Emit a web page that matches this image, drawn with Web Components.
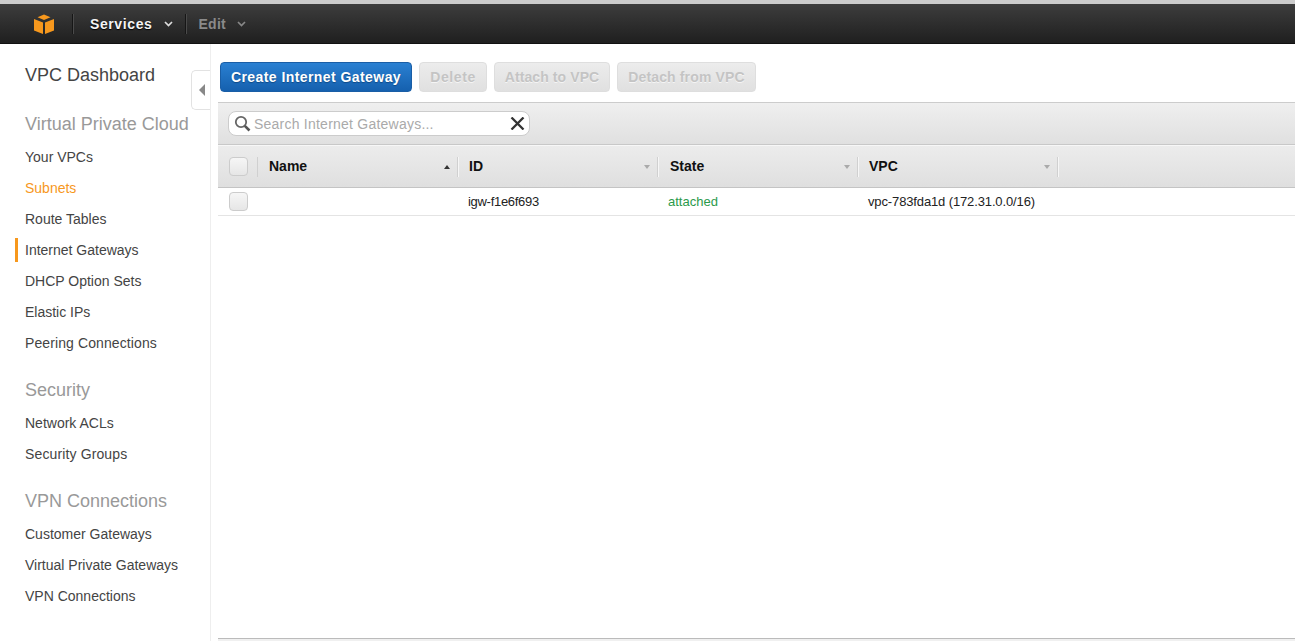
<!DOCTYPE html>
<html><head><meta charset="utf-8">
<style>
html,body{margin:0;padding:0;height:641px;overflow:hidden;background:#fff;font-family:"Liberation Sans",Arial,sans-serif}
body{display:flex;flex-direction:column}
</style></head><body>
<aws-nav></aws-nav>
<aws-shell>
<aws-side slot="side"></aws-side>
<aws-main slot="main"></aws-main>
</aws-shell>
<script>
function def(name,html){customElements.define(name,class extends HTMLElement{constructor(){super();this.attachShadow({mode:'open'}).innerHTML=html;}});}
def('aws-nav',`<style>
:host{display:block;height:44px;box-sizing:border-box;border-top:4px solid #ccc;background:linear-gradient(#3d3d3d,#1f1f1f);border-bottom:1px solid #111;color:#fff;font:bold 14px "Liberation Sans",sans-serif}
.r{display:flex;align-items:center;height:39px;padding-left:34px}
.sep{width:1px;height:20px;background:#4a4a4a;box-shadow:-1px 0 #161616}
svg{display:block}
.s{margin-left:16px;color:#f4f4f4;text-shadow:0 1px 1px #000;letter-spacing:.6px}
.e{margin-left:11px;color:#8a8a8a;letter-spacing:.3px}
.c1{margin-left:12px;margin-right:13px}
.c2{margin-left:11px}
</style><div class="r">
<svg width="20" height="20" viewBox="0 0 20 20"><path d="M0 5 L9 8.6 V20 L0 16.4Z M20 5 L11 8.6 V20 L20 16.4Z M10 0.5 L16.5 3.2 L10 5.9 L3.5 3.2Z" fill="#f7981d"/></svg>
<span class="sep" style="margin-left:19px"></span>
<span class="s">Services</span>
<svg class="c1" width="9" height="6" viewBox="0 0 9 6"><path d="M1 1 L4.5 4.5 L8 1" fill="none" stroke="#ddd" stroke-width="1.7"/></svg>
<span class="sep"></span>
<span class="e">Edit</span>
<svg class="c2" width="9" height="6" viewBox="0 0 9 6"><path d="M1 1 L4.5 4.5 L8 1" fill="none" stroke="#888" stroke-width="1.7"/></svg>
</div>`);
def('aws-shell',`<style>
:host{display:flex;flex:1;min-height:0;position:relative}
::slotted([slot=side]){width:211px;flex:none}
::slotted([slot=main]){flex:1;min-width:0}
.t{position:absolute;left:191px;top:26px;width:19px;height:40px;box-sizing:border-box;border:1px solid #e2e2e2;border-right:0;border-radius:5px 0 0 5px;background:#fff;display:flex;align-items:center;justify-content:center;padding-left:2px}
</style><slot name="side"></slot><slot name="main"></slot>
<div class="t"><svg width="6" height="12" viewBox="0 0 6 12"><path d="M6 0 V12 L0 6Z" fill="#888"/></svg></div>`);
def('side-link',`<style>
:host{display:block;height:24px;line-height:24px;margin-bottom:7px;font-size:14px;color:#444;padding-left:10px;margin-left:15px;position:relative}
:host([orange]){color:#f7981d}
:host([active]){box-shadow:inset 3px 0 #f7981d;}
</style><slot></slot>`);
def('side-head',`<style>
:host{display:block;font-size:18px;line-height:24px;color:#999;padding-left:25px;margin-bottom:9px}
:host([dash]){color:#444;margin-bottom:25px}
</style><slot></slot>`);
def('aws-side',`<style>
:host{display:block;box-sizing:border-box;border-right:1px solid #eee;padding-top:19px;font-family:"Liberation Sans",sans-serif}
.g{margin-top:23px}
</style>
<side-head dash>VPC Dashboard</side-head>
<side-head>Virtual Private Cloud</side-head>
<side-link>Your VPCs</side-link>
<side-link orange>Subnets</side-link>
<side-link>Route Tables</side-link>
<side-link active>Internet Gateways</side-link>
<side-link>DHCP Option Sets</side-link>
<side-link>Elastic IPs</side-link>
<side-link style="letter-spacing:.1px">Peering Connections</side-link>
<side-head class="g">Security</side-head>
<side-link>Network ACLs</side-link>
<side-link style="letter-spacing:.13px">Security Groups</side-link>
<side-head class="g">VPN Connections</side-head>
<side-link>Customer Gateways</side-link>
<side-link>Virtual Private Gateways</side-link>
<side-link>VPN Connections</side-link>`);
def('aws-btn',`<style>
:host{display:block;height:30px;box-sizing:border-box;text-align:center;font:bold 14px/28px "Liberation Sans",sans-serif;border:1px solid #dedede;border-radius:4px;background:linear-gradient(#ececec,#e0e0e0);color:#c4c4c4;text-shadow:0 1px 0 #f5f5f5}
:host([primary]){background:linear-gradient(#2a80d2,#1560ae);border-color:#1a5ea6;color:#fff;text-shadow:0 1px 1px #0f4a86}
</style><slot></slot>`);
def('aws-check',`<style>
:host{display:block;width:19px;height:19px;box-sizing:border-box;border:1px solid #ccc;border-radius:4px;background:linear-gradient(#f6f6f6,#e6e6e6)}
</style>`);
def('aws-col',`<style>
:host{display:flex;align-items:center;box-sizing:border-box;height:20px;border-right:1px solid #d0d0d0;box-shadow:1px 0 #f6f6f6;padding:0 7px 0 11px;font:bold 14px/16px "Liberation Sans",sans-serif;color:#111;justify-content:space-between}
:host([first]){border-left:1px solid #d0d0d0;padding-left:11px}
span{position:relative;top:-1px}
i{display:block;width:0;height:0;border:3.5px solid transparent;border-top:4px solid #aaa;border-bottom:0}
:host([up]) i{border-top:0;border-bottom:4px solid #333}
</style><span><slot></slot></span><i></i>`);
def('aws-main',`<style>
:host{display:flex;flex-direction:column;padding-left:7px;font-family:"Liberation Sans",sans-serif}
.tb{display:flex;gap:7px;padding:18px 0 10px 2px}
.search{height:43px;box-sizing:border-box;border-top:1px solid #ccc;border-bottom:1px solid #c8c8c8;background:linear-gradient(#efefef,#e0e0e0);display:flex;align-items:center;padding-left:10px}
.box{width:302px;height:25px;box-sizing:border-box;border:1px solid #ccc;border-radius:8px;background:#fff;display:flex;align-items:center;padding:0 4px 0 5px;font-size:14px;color:#aaa;letter-spacing:.23px}
.box span{flex:1;margin-left:3px}
.head{height:43px;box-sizing:border-box;border-top:1px solid #f7f7f7;border-bottom:1px solid #c4c4c4;background:linear-gradient(#ececec,#dfdfdf);display:flex;align-items:center;padding-left:11px}
.row{height:28px;box-sizing:border-box;border-bottom:1px solid #e4e4e4;display:flex;align-items:center;padding-left:11px;font-size:13px;color:#222}
.row span{display:block}
.fill{flex:1}
.foot{height:3px;border-top:1px solid #bbb;background:#f0f0f0;box-sizing:border-box}
</style>
<div class="tb">
<aws-btn primary style="width:192px;letter-spacing:.43px">Create Internet Gateway</aws-btn>
<aws-btn style="width:68px;letter-spacing:.6px">Delete</aws-btn>
<aws-btn style="width:116px;letter-spacing:.1px">Attach to VPC</aws-btn>
<aws-btn style="width:139px;letter-spacing:.15px">Detach from VPC</aws-btn>
</div>
<div class="search"><div class="box">
<svg width="17" height="17" viewBox="0 0 17 17"><circle cx="7" cy="7" r="5.2" fill="none" stroke="#666" stroke-width="1.8"/><path d="M10.8 10.8 L15.5 15.5" stroke="#555" stroke-width="2.6"/></svg>
<span>Search Internet Gateways...</span>
<svg width="15" height="13" viewBox="0 0 15 13"><path d="M1.5 0.5 L13.5 12.5 M13.5 0.5 L1.5 12.5" stroke="#333" stroke-width="2.3"/></svg>
</div></div>
<div class="head">
<aws-check></aws-check>
<aws-col first up style="margin-left:9px;width:201px">Name</aws-col>
<aws-col style="width:200px">ID</aws-col>
<aws-col style="width:200px"><span style="margin-left:1px">State</span></aws-col>
<aws-col style="width:200px">VPC</aws-col>
</div>
<div class="row">
<aws-check></aws-check>
<span style="margin-left:220px;width:200px;letter-spacing:-.3px">igw-f1e6f693</span>
<span style="width:200px;color:#2b9a4b">attached</span>
<span style="letter-spacing:-.13px">vpc-783fda1d (172.31.0.0/16)</span>
</div>
<div class="fill"></div>
<div class="foot"></div>`);
</script>
</body></html>
